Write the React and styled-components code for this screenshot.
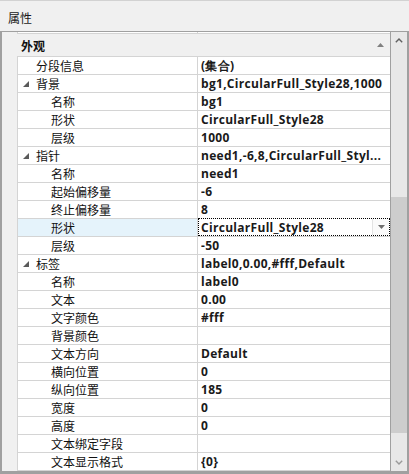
import React from 'react';
import styled, { createGlobalStyle } from 'styled-components';

const GlobalStyle = createGlobalStyle`
  html, body {
    margin: 0;
    padding: 0;
    background: #f0f0f0;
  }
  body {
    font-family: "Noto Sans CJK SC", "Noto Sans", sans-serif;
    font-size: 12px;
    color: #000;
  }
`;

const Panel = styled.div`
  width: 409px;
  height: 474px;
  display: flex;
  flex-direction: column;
  background: #f0f0f0;
  overflow: hidden;
`;

const TitleBar = styled.div`
  height: 31px;
  box-sizing: border-box;
  border-top: 1px solid #d2d2d2;
  padding: 2px 0 0 8px;
  display: flex;
  align-items: center;
  font-size: 12px;
  color: #1a1a1a;
  flex: none;
`;

const Frame = styled.div`
  flex: 1;
  display: flex;
  min-height: 0;
  border-top: 1px solid #a0a0a0;
  border-left: 2px solid #a0a0a0;
  border-right: 2px solid #a0a0a0;
  border-bottom: 3px solid #a0a0a0;
`;

const Grid = styled.div`
  width: 389px;
  box-sizing: border-box;
  border-right: 1px solid #a0a0a0;
  background: #f0f0f0;
  overflow: hidden;
  display: flex;
  flex-direction: column;
`;

const Stub = styled.div`
  margin-left: 15px;
  height: 1px;
  display: flex;
  border-bottom: 1px solid #d4d4d4;
  flex: none;

  &::before {
    content: '';
    width: 179px;
    border-left: 1px solid #d4d4d4;
    border-right: 1px solid #d4d4d4;
    background: #fff;
  }
  &::after {
    content: '';
    flex: 1;
    background: #fff;
  }
`;

const CategoryRow = styled.div`
  height: 22px;
  flex: none;
  display: flex;
  align-items: center;
  padding-left: 19px;
  padding-right: 6px;
  font-weight: 700;
  font-size: 12px;
  color: #111;
`;

const CategoryName = styled.span`
  flex: 1;
  padding-top: 1px;
`;

const List = styled.div`
  margin-left: 15px;
  border-top: 1px solid #d4d4d4;
  border-left: 1px solid #d4d4d4;
  flex: none;
`;

const Row = styled.div`
  display: flex;
  height: 17px;
  border-bottom: 1px solid #d4d4d4;
`;

const LabelCell = styled.div`
  width: 179px;
  flex: none;
  display: flex;
  align-items: center;
  border-right: 1px solid #d4d4d4;
  background: ${(p) => (p.$selected ? '#e5f3fb' : '#fff')};
  color: #111;
  white-space: nowrap;
  line-height: 17px;
`;

const Indent = styled.span`
  width: ${(p) => (p.$level ? 33 : 18)}px;
  flex: none;
  display: flex;
  align-items: center;
  padding-left: 5px;
  box-sizing: border-box;
`;

const ValueCell = styled.div`
  flex: 1;
  min-width: 0;
  display: flex;
  align-items: center;
  box-sizing: border-box;
  padding-left: 3px;
  background: #fff;
  font-family: "Open Sans", "Liberation Sans", sans-serif;
  font-weight: 700;
  font-size: 12px;
  letter-spacing: 0.3px;
  color: #1a1a1a;
  white-space: nowrap;
  overflow: hidden;
  line-height: 17px;
  ${(p) => p.$selected && 'border: 1px dotted #000; padding-left: 2px; margin-top: -1px; height: 18px;'}
`;

const ValueText = styled.span`
  flex: 1;
  min-width: 0;
  overflow: hidden;
`;

const DropButton = styled.span`
  width: 16px;
  align-self: stretch;
  flex: none;
  display: flex;
  align-items: center;
  justify-content: center;
  border-left: 1px solid #e3e3e3;
  background: #fafafa;
`;

const Scrollbar = styled.div`
  width: 16px;
  flex: none;
  display: flex;
  flex-direction: column;
  background: #e8e8e8;
`;

const ArrowButton = styled.div`
  height: 17px;
  flex: none;
  display: flex;
  align-items: center;
  justify-content: center;
`;

const Track = styled.div`
  flex: 1;
  min-height: 0;
`;

const Thumb = styled.div`
  margin: 148px 0 0 0;
  height: 236px;
  background: #cdcdcd;
`;

const Expander = () => (
  <svg width="6" height="6" viewBox="0 0 6 6">
    <polygon points="6,0 6,6 0,6" fill="#5a5a5a" />
  </svg>
);

const Chevron = ({ down, color }) => (
  <svg width="8" height="5" viewBox="0 0 8 5" style={down ? { transform: 'rotate(180deg)' } : undefined}>
    <polyline points="0.8,4.2 4,1 7.2,4.2" fill="none" stroke={color} strokeWidth="1.4" />
  </svg>
);

const rows = [
  { label: '分段信息', value: '(集合)' },
  { label: '背景', value: 'bg1,CircularFull_Style28,1000', group: true },
  { label: '名称', value: 'bg1', level: 1 },
  { label: '形状', value: 'CircularFull_Style28', level: 1 },
  { label: '层级', value: '1000', level: 1 },
  { label: '指针', value: 'need1,-6,8,CircularFull_Styl...', group: true },
  { label: '名称', value: 'need1', level: 1 },
  { label: '起始偏移量', value: '-6', level: 1 },
  { label: '终止偏移量', value: '8', level: 1 },
  { label: '形状', value: 'CircularFull_Style28', level: 1, selected: true },
  { label: '层级', value: '-50', level: 1 },
  { label: '标签', value: 'label0,0.00,#fff,Default', group: true },
  { label: '名称', value: 'label0', level: 1 },
  { label: '文本', value: '0.00', level: 1 },
  { label: '文字颜色', value: '#fff', level: 1 },
  { label: '背景颜色', value: '', level: 1 },
  { label: '文本方向', value: 'Default', level: 1 },
  { label: '横向位置', value: '0', level: 1 },
  { label: '纵向位置', value: '185', level: 1 },
  { label: '宽度', value: '0', level: 1 },
  { label: '高度', value: '0', level: 1 },
  { label: '文本绑定字段', value: '', level: 1 },
  { label: '文本显示格式', value: '{0}', level: 1 },
];

const App = () => (
  <>
    <GlobalStyle />
    <Panel>
      <TitleBar>属性</TitleBar>
      <Frame>
        <Grid>
          <Stub />
          <CategoryRow>
            <CategoryName>外观</CategoryName>
            <svg width="7" height="4" viewBox="0 0 7 4">
              <polygon points="0,4 3.5,0 7,4" fill="#808080" />
            </svg>
          </CategoryRow>
          <List>
            {rows.map((r, i) => (
              <Row key={i}>
                <LabelCell $selected={r.selected}>
                  <Indent $level={r.level}>{r.group && <Expander />}</Indent>
                  {r.label}
                </LabelCell>
                <ValueCell $selected={r.selected}>
                  <ValueText>{r.value}</ValueText>
                  {r.selected && (
                    <DropButton>
                      <svg width="7" height="4" viewBox="0 0 7 4">
                        <polygon points="0,0 7,0 3.5,4" fill="#6e6e6e" />
                      </svg>
                    </DropButton>
                  )}
                </ValueCell>
              </Row>
            ))}
          </List>
        </Grid>
        <Scrollbar>
          <ArrowButton>
            <Chevron color="#606060" />
          </ArrowButton>
          <Track>
            <Thumb />
          </Track>
          <ArrowButton>
            <Chevron down color="#9a9a9a" />
          </ArrowButton>
        </Scrollbar>
      </Frame>
    </Panel>
  </>
);

export default App;
